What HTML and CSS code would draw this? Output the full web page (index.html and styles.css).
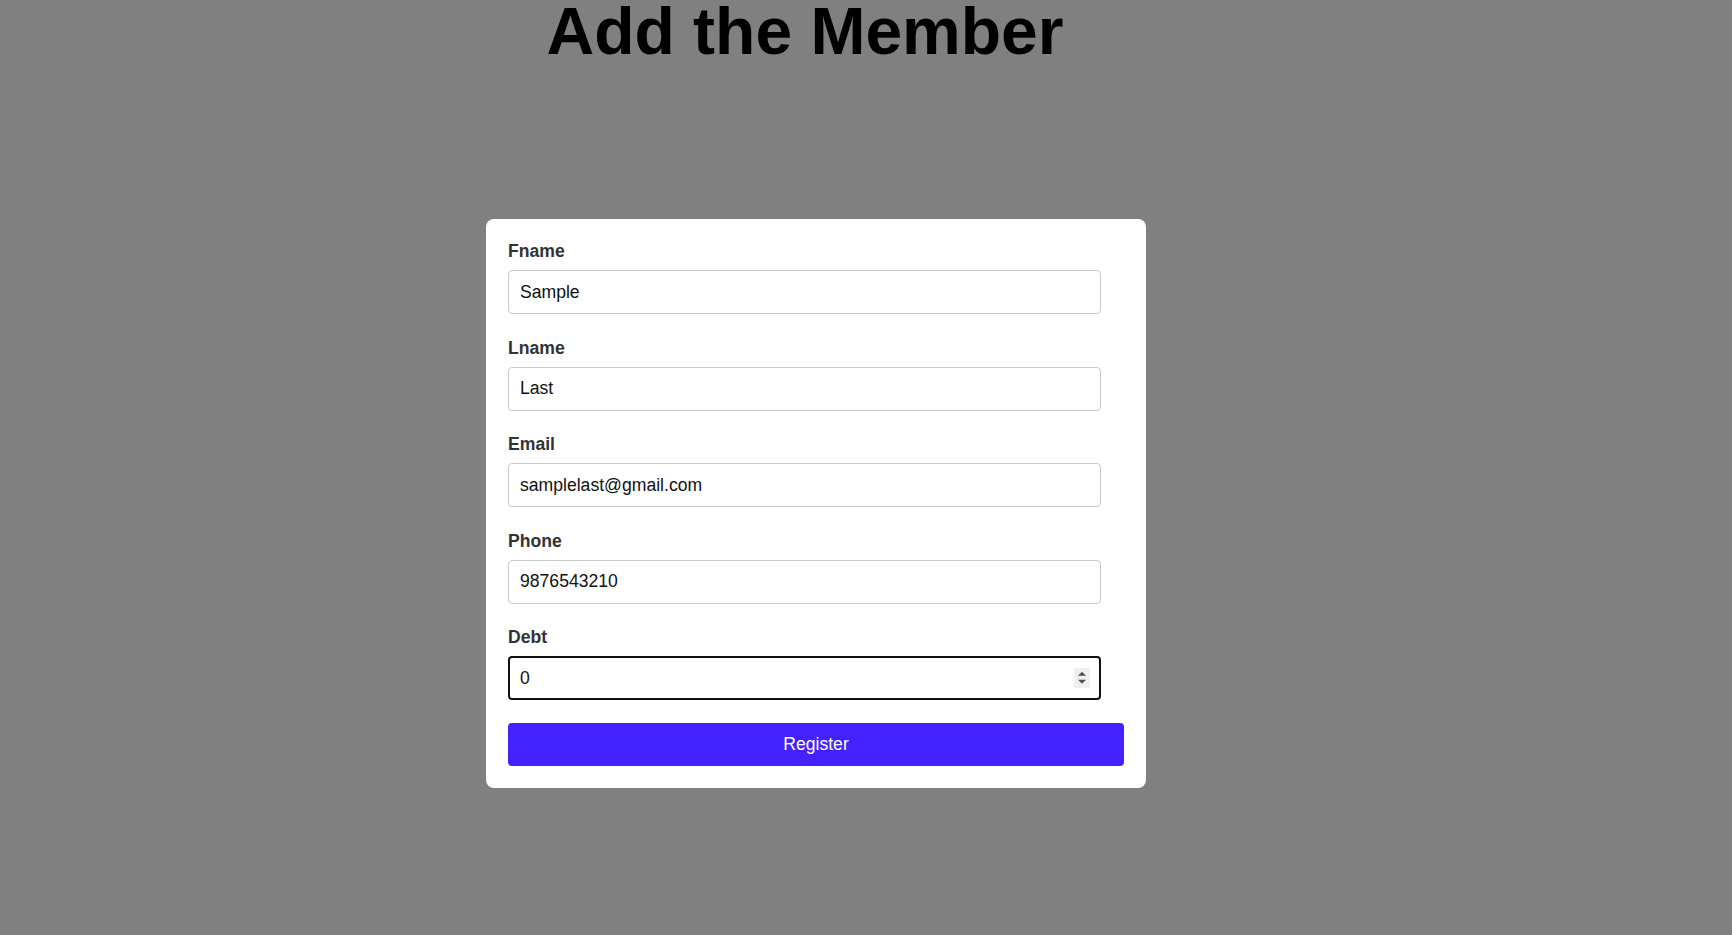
FILE: index.html
```html
<!DOCTYPE html>
<html lang="en">
<head>
<meta charset="utf-8">
<title>Add the Member</title>
<link rel="stylesheet" href="styles.css">
</head>
<body>
<main class="page">
  <h1 class="title">Add the Member</h1>
  <form class="card">
    <div class="field">
      <label class="label" for="fname">Fname</label>
      <input class="input" id="fname" type="text" value="Sample">
    </div>
    <div class="field">
      <label class="label" for="lname">Lname</label>
      <input class="input" id="lname" type="text" value="Last">
    </div>
    <div class="field">
      <label class="label" for="email">Email</label>
      <input class="input" id="email" type="text" value="samplelast@gmail.com">
    </div>
    <div class="field">
      <label class="label" for="phone">Phone</label>
      <input class="input" id="phone" type="text" value="9876543210">
    </div>
    <div class="field">
      <label class="label" for="debt">Debt</label>
      <div class="number-wrap">
        <input class="input input-focused" id="debt" type="text" value="0">
        <svg class="spinner" width="16" height="20" viewBox="0 0 16 20" aria-hidden="true">
          <rect x="0" y="0" width="16" height="20" fill="#efefef"/>
          <polygon points="8,3.7 12,7.7 4,7.7" fill="#505050"/>
          <polygon points="4,11.7 12,11.7 8,15.7" fill="#505050"/>
        </svg>
      </div>
    </div>
    <button class="button" type="button">Register</button>
  </form>
</main>
</body>
</html>
```

FILE: styles.css
```css
html, body {
  margin: 0;
  padding: 0;
}

body {
  background: #808080;
  font-family: "Liberation Sans", Arial, sans-serif;
  min-height: 935px;
}

.page {
  display: flex;
  flex-direction: column;
  align-items: center;
  padding-right: 100px;
}

.title {
  margin: 0 22px 0 0;
  font-size: 66px;
  line-height: 62px;
  font-weight: 700;
  color: #000;
}

.card {
  margin-top: 157px;
  width: 616px;
  padding: 22px;
  background: #fff;
  border-radius: 8px;
  display: flex;
  flex-direction: column;
}

.field {
  display: flex;
  flex-direction: column;
  margin-bottom: 23.5px;
}

.field:last-of-type {
  margin-bottom: 22.5px;
}

.label {
  font-size: 17.6px;
  font-weight: 700;
  color: #333;
  margin-bottom: 8px;
}

.input {
  box-sizing: border-box;
  width: 593px;
  height: 44px;
  padding: 0 11px;
  border: 1px solid #c9c9c9;
  border-radius: 4px;
  font-family: "Liberation Sans", Arial, sans-serif;
  font-size: 17.6px;
  color: #111;
  background: #fff;
  outline: none;
}

.input-focused {
  border: 2px solid #101010;
  padding: 0 10px;
}

.number-wrap {
  position: relative;
  width: 593px;
}

.spinner {
  position: absolute;
  right: 11px;
  top: 12px;
}

.button {
  box-sizing: border-box;
  width: 100%;
  height: 43px;
  border: none;
  border-radius: 4px;
  background: #4422ff;
  color: #fff;
  font-family: "Liberation Sans", Arial, sans-serif;
  font-size: 17.6px;
  cursor: pointer;
}
```
